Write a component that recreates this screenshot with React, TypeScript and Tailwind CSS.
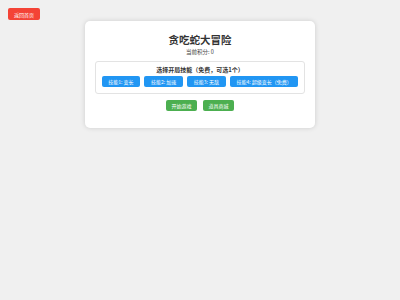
const skills = ["技能1: 变长", "技能2: 加速", "技能3: 无敌", "技能4: 超级变长（免费）"];

export default function App() {
  return (
    <div
      className="min-h-[300px] w-[400px] bg-[#f0f0f0] pt-2"
      style={{ fontFamily: '"Noto Sans CJK SC", "Noto Sans", sans-serif' }}
    >
      <div className="pl-2">
        <button className="flex h-[12px] w-[32px] items-center justify-center rounded-[2px] bg-[#f44336] text-[5px] leading-none text-white">
          返回首页
        </button>
      </div>

      <div className="mx-auto mt-[1px] w-[230px] rounded-[5px] bg-white px-[10px] pt-[13px] pb-[17px] shadow-[0_0_5px_rgba(0,0,0,0.15)]">
        <h1 className="text-center text-[10.5px] font-bold leading-[12px] text-[#333]">贪吃蛇大冒险</h1>
        <p className="mt-[3px] text-center text-[5.5px] leading-[6px] text-[#444]">当前积分: 0</p>

        <div className="mt-[6px] rounded-[3px] border border-[#e3e3e3] px-1 pt-[3.5px] pb-[6px]">
          <h2 className="text-center text-[6px] font-bold leading-[7px] text-[#333]">选择开局技能（免费，可选1个）</h2>
          <div className="mt-[3.5px] flex justify-center gap-[4.5px]">
            {skills.map((s) => (
              <button
                key={s}
                className="flex h-[11px] items-center rounded-[2px] bg-[#2196f3] px-[6.5px] text-[5px] leading-none whitespace-nowrap text-white"
              >
                {s}
              </button>
            ))}
          </div>
        </div>

        <div className="mt-[6px] flex justify-center gap-[6px]">
          <button className="flex h-[11px] items-center rounded-[2px] bg-[#4caf50] px-[5.5px] text-[5px] leading-none text-white">
            开始游戏
          </button>
          <button className="flex h-[11px] items-center rounded-[2px] bg-[#4caf50] px-[5.5px] text-[5px] leading-none text-white">
            道具商城
          </button>
        </div>
      </div>
    </div>
  );
}
